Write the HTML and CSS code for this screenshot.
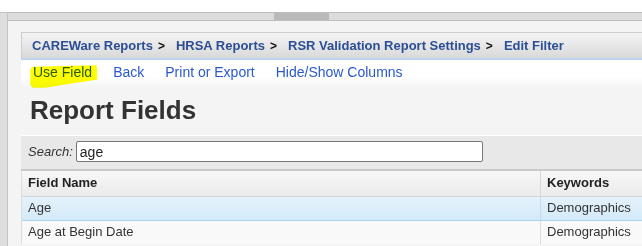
FILE: index.html
```html
<!DOCTYPE html>
<html>
<head>
<meta charset="utf-8">
<link rel="stylesheet" href="styles.css">
</head>
<body>
<div class="top-gap"></div>
<div class="frame">
  <div class="side-strip"></div>
  <div class="main">
    <div class="splitter"><div class="handle"></div></div>
    <div class="content">
      <div class="breadcrumb">
        <a class="crumb">CAREWare Reports</a><span class="sep">&gt;</span>
        <a class="crumb">HRSA Reports</a><span class="sep">&gt;</span>
        <a class="crumb">RSR Validation Report Settings</a><span class="sep">&gt;</span>
        <a class="crumb">Edit Filter</a>
      </div>
      <div class="toolbar">
        <a class="link used">Use Field<svg class="highlight" width="68" height="23" viewBox="0 0 68 23"><path d="M1 5 L3 2.5 L66 1 L66.5 14 L40 18 L15 22 L3 22 L1 19.5 Z" fill="#ffff00" stroke="#ffff00" stroke-width="1.5" stroke-linejoin="round"/></svg></a>
        <a class="link">Back</a>
        <a class="link">Print or Export</a>
        <a class="link">Hide/Show Columns</a>
      </div>
      <h1 class="title">Report Fields</h1>
      <div class="search">
        <label class="search-label">Search:</label>
        <input class="search-input" type="text" value="age">
      </div>
      <div class="grid">
        <div class="row head">
          <div class="cell">Field Name</div>
          <div class="cell col2">Keywords</div>
        </div>
        <div class="row selected">
          <div class="cell">Age</div>
          <div class="cell col2">Demographics</div>
        </div>
        <div class="row plain">
          <div class="cell">Age at Begin Date</div>
          <div class="cell col2">Demographics</div>
        </div>
      </div>
    </div>
  </div>
</div>
</body>
</html>
```

FILE: styles.css
```css
html, body {
  margin: 0;
  padding: 0;
  background: #ffffff;
  overflow: hidden;
}
body {
  font-family: "Liberation Sans", Arial, sans-serif;
  width: 642px;
  height: 246px;
}
.top-gap {
  height: 12px;
}
.frame {
  display: flex;
  height: 234px;
}
.side-strip {
  width: 7px;
  background: #dedede;
  border-right: 1px solid #c4c4c4;
  border-top: 1px solid #c4c4c4;
}
.main {
  flex: 1;
  display: flex;
  flex-direction: column;
  min-width: 0;
}
.splitter {
  height: 7px;
  background: #dcdcdc;
  border-top: 1px solid #bdbdbd;
  border-bottom: 1px solid #bdbdbd;
  display: flex;
}
.handle {
  width: 55px;
  margin-left: 266px;
  background: #b9b9b9;
}
.content {
  flex: 1;
  background: #f4f4f4;
  padding: 11px 0 0 13px;
}
.breadcrumb {
  display: flex;
  align-items: center;
  height: 25px;
  padding-left: 10px;
  border-top: 1px solid #cdcdcd;
  border-left: 1px solid #cdcdcd;
  border-bottom: 2px solid #bcd6ef;
  background: linear-gradient(to bottom, #f4f4f4, #d9d9d9);
  font-size: 13px;
  font-weight: bold;
  white-space: nowrap;
}
.crumb {
  color: #2c4e95;
}
.sep {
  color: #111;
  margin: 0 11px 0 5px;
  font-size: 12px;
}
.toolbar {
  display: flex;
  gap: 21px;
  padding: 1px 0 4px 12px;
  line-height: 23px;
  font-size: 14px;
  background: linear-gradient(to bottom, #ffffff 0%, #ffffff 60%, #f4f4f4 100%);
  border-bottom-left-radius: 7px;
  white-space: nowrap;
}
.link {
  color: #2a5ac8;
}
.used {
  position: relative;
}
.highlight {
  position: absolute;
  left: -3px;
  top: 4px;
  mix-blend-mode: multiply;
}
.title {
  margin: 7px 0 0;
  padding-left: 9px;
  font-size: 26px;
  line-height: 30px;
  font-weight: bold;
  color: #333333;
}
.search {
  margin-top: 10px;
  display: flex;
  align-items: center;
  border-top: 1px solid #ffffff;
  border-bottom: 2px solid #c9c9c9;
  background: #e8e8e8;
  padding: 5px 0 7px 7px;
}
.search-label {
  font-size: 13px;
  font-style: italic;
  color: #333;
  margin-right: 3px;
}
.search-input {
  box-sizing: border-box;
  width: 407px;
  height: 21px;
  margin: 0;
  padding: 0 3px;
  border: 1px solid #777777;
  border-radius: 2px;
  background: #ffffff;
  font-family: "Liberation Sans", Arial, sans-serif;
  font-size: 14px;
  color: #222;
  outline: none;
}
.grid {
  border-left: 1px solid #dddddd;
  font-size: 13px;
  color: #333;
}
.row {
  display: grid;
  grid-template-columns: 518px 1fr;
  white-space: nowrap;
}
.cell {
  padding-left: 6px;
}
.col2 {
  border-left: 1px solid #d6d6d6;
  padding-left: 6px;
}
.head {
  background: linear-gradient(to bottom, #f7f7f7, #ebebeb);
  border-bottom: 1px solid #d3d7db;
  font-weight: bold;
  color: #222;
}
.head .cell {
  line-height: 23px;
  padding-bottom: 2px;
}
.selected {
  background: linear-gradient(to bottom, #e4f2fc, #d4eaf8);
  border-bottom: 1px solid #a9d3ef;
}
.selected .col2 {
  border-left-color: #c4dced;
}
.selected .cell, .plain .cell {
  line-height: 21px;
  padding-bottom: 2px;
}
.plain {
  background: #f9f9f9;
}
.plain .col2 {
  border-left-color: #dedede;
}
```
